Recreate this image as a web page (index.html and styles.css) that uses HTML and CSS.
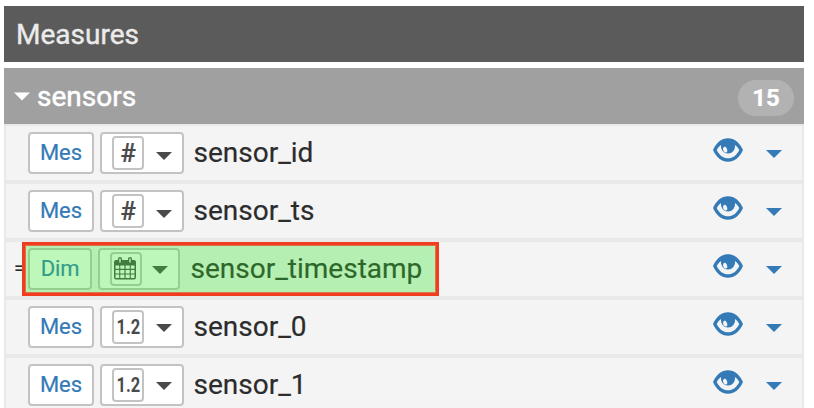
FILE: index.html
```html
<!DOCTYPE html>
<html lang="en">
<head>
<meta charset="utf-8">
<title>Measures</title>
<link rel="stylesheet" href="styles.css">
</head>
<body>
<svg class="defs" width="0" height="0">
  <symbol id="caret" viewBox="0 0 16 8"><path d="M0 0H16L8 8Z"/></symbol>
  <symbol id="eye" viewBox="0 0 30 24">
    <path fill-rule="evenodd" d="M15 .3C8.500.3 3.500 4.500 0 12C3.500 19.500 8.500 23.700 15 23.700S26.500 19.500 30 12C26.500 4.500 21.500.3 15 .3ZM8 7A7.100 7.300 0 1 0 22 7Q24.800 8.800 26.300 12C23.500 17.500 20 20.300 15 20.300S6.500 17.500 3.700 12Q5.200 8.800 8 7ZM11 9C9.200 10.200 10.200 13.600 12.300 14.400C14.800 14.800 14.600 12 13.700 10.400C13 8.800 12 8.300 11 9Z"/>
  </symbol>
  <symbol id="calendar" viewBox="0 0 22 23">
    <path fill-rule="evenodd" d="M2 3H4V2Q4 0 6 0T8 2V3H14V2Q14 0 16 0T18 2V3H20Q22 3 22 5V20.500Q22 22.500 20 22.500H2Q0 22.500 0 20.500V5Q0 3 2 3ZM1.500 8.500V11.800H5.200V8.500ZM6.300 8.500V11.800H10.400V8.500ZM11.600 8.500V11.800H15.700V8.500ZM16.800 8.500V11.800H20.500V8.500ZM1.500 12.900V16.400H5.200V12.900ZM6.300 12.900V16.400H10.400V12.900ZM11.600 12.900V16.400H15.700V12.900ZM16.800 12.900V16.400H20.500V12.900ZM1.500 17.500V20.900H5.200V17.500ZM6.300 17.500V20.900H10.400V17.500ZM11.600 17.500V20.900H15.700V17.500ZM16.800 17.500V20.900H20.500V17.500ZM5.300 1.500V5.500H6.700V1.500ZM15.300 1.500V5.500H16.700V1.500Z"/>
  </symbol>
</svg>
<main class="panel">
  <header class="title">Measures</header>
  <section>
    <div class="group"><svg class="caret"><use href="#caret"/></svg><span class="group-name">sensors</span><span class="count">15</span></div>
    <div class="row">
      <span class="role">Mes</span><span class="type"><span class="glyph hash">#</span><svg class="caret"><use href="#caret"/></svg></span><span class="name">sensor_id</span>
      <svg class="eye"><use href="#eye"/></svg><svg class="caret menu"><use href="#caret"/></svg>
    </div>
    <div class="row">
      <span class="role">Mes</span><span class="type"><span class="glyph hash">#</span><svg class="caret"><use href="#caret"/></svg></span><span class="name">sensor_ts</span>
      <svg class="eye"><use href="#eye"/></svg><svg class="caret menu"><use href="#caret"/></svg>
    </div>
    <div class="row dimension">
      <span class="formula">=</span><span class="role">Dim</span><span class="type"><span class="glyph"><svg class="calendar"><use href="#calendar"/></svg></span><svg class="caret"><use href="#caret"/></svg></span><span class="name">sensor_timestamp</span>
      <svg class="eye"><use href="#eye"/></svg><svg class="caret menu"><use href="#caret"/></svg>
      <div class="highlight"></div>
    </div>
    <div class="row">
      <span class="role">Mes</span><span class="type"><span class="glyph decimal"><span class="digits">1.2</span></span><svg class="caret"><use href="#caret"/></svg></span><span class="name">sensor_0</span>
      <svg class="eye"><use href="#eye"/></svg><svg class="caret menu"><use href="#caret"/></svg>
    </div>
    <div class="row">
      <span class="role">Mes</span><span class="type"><span class="glyph decimal"><span class="digits">1.2</span></span><svg class="caret"><use href="#caret"/></svg></span><span class="name">sensor_1</span>
      <svg class="eye"><use href="#eye"/></svg><svg class="caret menu"><use href="#caret"/></svg>
    </div>
  </section>
</main>
</body>
</html>
```
FILE: styles.css
```css
* { box-sizing: border-box; }
html, body { height: 100%; overflow: hidden; }
body { margin: 0; background: #fff; font-family: Roboto, sans-serif; color: #2c2c2c; -webkit-text-stroke: .2px currentColor; }
.defs { position: absolute; }
.panel { width: 800px; margin: 6px 0 0 4px; }
.title { height: 56px; margin-bottom: 6px; padding-left: 12px; background: #5b5b5b; color: #ebebeb; font-size: 28px; line-height: 58px; -webkit-text-stroke-width: .4px; }
.group { display: flex; align-items: center; height: 56px; padding: 0 10px; background: #a0a0a0; color: #fff; font-size: 28px; }
.caret { flex: none; width: 16px; height: 8px; fill: currentColor; }
.group .caret { height: 9px; }
.group-name { margin-left: 7px; line-height: 54px; padding-top: 2px; -webkit-text-stroke-width: .5px; }
.count { width: 56px; height: 36px; margin: 4px 0 0 auto; border-radius: 18px; background: #b2b2b2; font-size: 24px; font-weight: 700; line-height: 37px; text-align: center; }
.row { position: relative; display: flex; height: 58px; padding: 6px 20px 0 22px; border: 2px solid #e9e9e9; background: #f4f4f4; }
.role, .type { flex: none; height: 42px; border: 2px solid #c3c3c3; border-radius: 4px; background: #fff; }
.role { width: 66px; color: #337ab7; font-size: 22px; line-height: 37px; text-align: center; }
.type { display: flex; width: 84px; margin-left: 6px; padding: 2px 0 0 10px; color: #4a4a4a; }
.type .caret { margin: 16px 0 0 12px; }
.glyph { display: flex; flex: none; justify-content: center; width: 32px; height: 34px; border: 2px solid #c3c3c3; border-radius: 4px; }
.hash { font-size: 26px; font-weight: 500; line-height: 31px; }
.decimal { font-size: 20px; font-weight: 700; line-height: 30px; }
.digits { flex: none; transform: scaleX(.82); -webkit-text-stroke-width: 0; }
.decimal + .caret { margin-top: 14px; }
.calendar { width: 22px; height: 23px; margin: 3px 2px 0 0; fill: #4a4a4a; }
.name { margin-left: 9.5px; font-size: 28px; line-height: 41px; }
.eye { flex: none; width: 30px; height: 24px; margin: 6px 23px 0 auto; fill: #337ab7; }
.menu { margin-top: 18px; color: #337ab7; }
.dimension .role { width: 64px; letter-spacing: -.2px; }
.dimension .type { width: 82px; }
.dimension .type .caret { margin: 14px 0 0 10px; }
.dimension .name { margin-left: 10.5px; }
.formula { position: absolute; left: 8px; top: 14px; font-size: 20px; line-height: 24px; }
.highlight { position: absolute; left: 16px; top: 0; width: 417px; height: 54px; border: 3px solid #f03d20; outline: 1px solid rgba(240, 61, 32, .7); outline-offset: -4px; background: rgba(53, 230, 41, .32); background-clip: padding-box; }
```
